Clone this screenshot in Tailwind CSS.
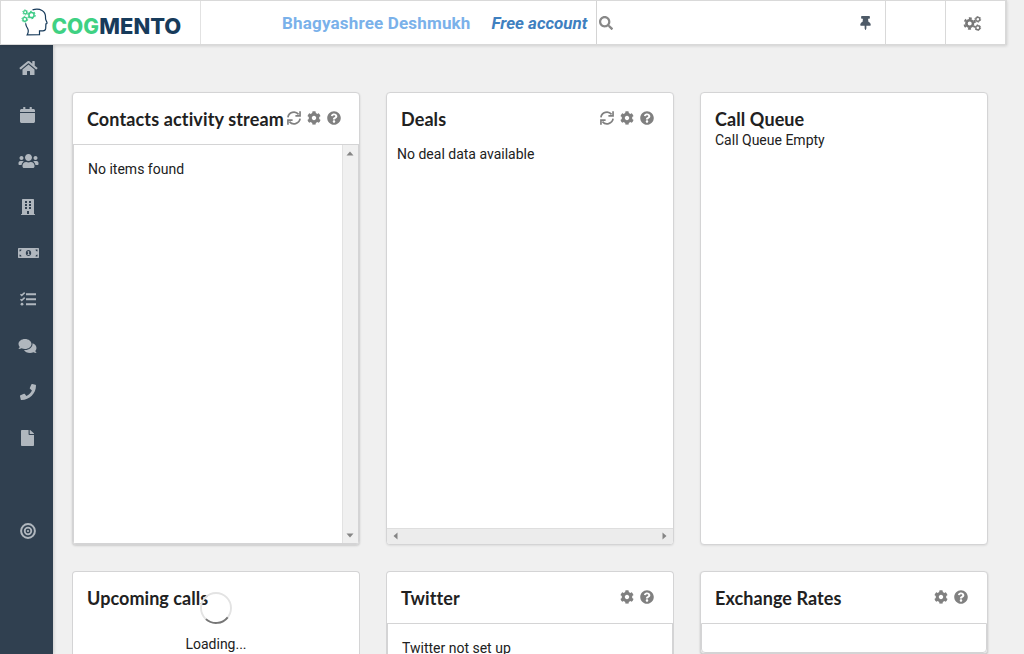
<!DOCTYPE html>
<html lang="en">
<head>
<meta charset="utf-8">
<title>Cogmento CRM</title>
<script src="https://cdn.jsdelivr.net/npm/@tailwindcss/browser@4"></script>
</head>
<body class="w-[1024px] h-[654px] overflow-hidden bg-[#f0f0f0] font-['Roboto',sans-serif] text-sm text-[#212121]">
<svg class="hidden">
  <symbol id="cog" viewBox="0 0 512 512"><path d="M487.4 315.7l-42.6-24.6c4.3-23.2 4.3-47 0-70.2l42.6-24.6c4.9-2.8 7.1-8.6 5.5-14-11.1-35.6-30-67.8-54.7-94.6-3.8-4.1-10-5.1-14.8-2.3L380.8 110c-17.9-15.4-38.5-27.3-60.8-35.1V25.8c0-5.6-3.9-10.5-9.4-11.7-36.7-8.2-74.3-7.8-109.2 0-5.5 1.2-9.4 6.1-9.4 11.7V75c-22.2 7.9-42.8 19.8-60.8 35.1L88.7 85.5c-4.9-2.8-11-1.9-14.8 2.3-24.7 26.7-43.6 58.9-54.7 94.6-1.7 5.4.6 11.2 5.5 14L67.3 221c-4.3 23.2-4.3 47 0 70.2l-42.6 24.6c-4.9 2.8-7.1 8.6-5.5 14 11.1 35.6 30 67.8 54.7 94.6 3.8 4.1 10 5.1 14.8 2.3l42.6-24.6c17.9 15.4 38.5 27.3 60.8 35.1v49.2c0 5.6 3.9 10.5 9.4 11.7 36.7 8.2 74.3 7.8 109.2 0 5.5-1.2 9.4-6.1 9.4-11.7v-49.2c22.2-7.9 42.8-19.8 60.8-35.1l42.6 24.6c4.9 2.8 11 1.9 14.8-2.3 24.7-26.7 43.6-58.9 54.7-94.6 1.5-5.5-.7-11.3-5.6-14.1zM256 336c-44.1 0-80-35.9-80-80s35.9-80 80-80 80 35.9 80 80-35.9 80-80 80z"/></symbol>
  <symbol id="help" viewBox="0 0 512 512"><path d="M504 256c0 136.997-111.043 248-248 248S8 392.997 8 256C8 119.083 119.043 8 256 8s248 111.083 248 248zM262.655 90c-54.497 0-89.255 22.957-116.549 63.758-3.536 5.286-2.353 12.415 2.715 16.258l34.699 26.31c5.205 3.947 12.621 3.008 16.665-2.122 17.864-22.658 30.113-35.797 57.303-35.797 20.429 0 45.698 13.148 45.698 32.958 0 14.976-12.363 22.667-32.534 33.976C247.128 238.528 216 254.941 216 296v4c0 6.627 5.373 12 12 12h56c6.627 0 12-5.373 12-12v-1.333c0-28.462 83.186-29.647 83.186-106.667 0-58.002-60.165-102-116.531-102zM256 338c-25.365 0-46 20.635-46 46 0 25.364 20.635 46 46 46s46-20.636 46-46c0-25.365-20.635-46-46-46z"/></symbol>
  <symbol id="sync" viewBox="0 0 14 14"><path d="M.9 6.3A6.1 6.1 0 0 1 11.6 3.4M13.1 7.7A6.1 6.1 0 0 1 2.4 10.600" fill="none" stroke="currentColor" stroke-width="1.700"/><path d="M12.200 .2h1.700v5.500H8.400V4.100h3.800zM1.800 13.800H.1V8.300h5.500v1.600H1.800z"/></symbol>
</svg>

<header class="flex h-[45px] w-[1007px] bg-white border border-[#d9d9d9] border-r-2 shadow-[0_1px_3px_rgba(0,0,0,.14)] relative z-10">
  <div class="w-[200px] border-r border-[#e2e2e2] pl-5 pt-[7px]">
    <svg width="164" height="32" viewBox="0 0 164 32">
      <path d="M11.500 1.900C14.500 .9 18.500 1 21 2.500c2.600 1.500 3.700 4 3.500 7 0 1.200.1 1.900.5 2.800l.9 2c.3.900 0 1.300-1 1.600l-.2 4.500c-.2 1.900-1 2.500-2.800 2.500h-3.400v3.700l-12.300.2c1.400-2.500 1.500-4.500.3-6.500-1-1.600-1.700-3-1.900-5" fill="none" stroke="#173b5b" stroke-width="1.200"/>
      <g fill="none" stroke="#3ecb86"><circle cx="10.500" cy="7" r="2.600" stroke-width="1.500"/><circle cx="10.500" cy="7" r="3.700" stroke-width="1.100" stroke-dasharray="1.940 1.940"/><circle cx="4.200" cy="4.300" r="1.600" stroke-width="1.200"/><circle cx="4.200" cy="4.300" r="2.500" stroke-width=".9" stroke-dasharray="1.310 1.310"/><circle cx="3.800" cy="11.300" r="1.900" stroke-width="1.400"/><circle cx="3.800" cy="11.300" r="2.900" stroke-width="1" stroke-dasharray="1.520 1.520"/></g>
      <g font-family="Inter, sans-serif" font-weight="800" font-size="21.500"><text x="30.500" y="26.300" fill="#3fd183" textLength="47.500" lengthAdjust="spacingAndGlyphs">COG</text><text x="78.300" y="26.300" fill="#173b5b" textLength="82" lengthAdjust="spacingAndGlyphs">MENTO</text></g>
    </svg>
  </div>
  <div class="flex w-[396px] border-r border-[#d4d4d4] pl-[81px] pt-[11px] font-bold leading-[22px] whitespace-nowrap">
    <span class="text-[17px] tracking-[.18px] text-[#7ab1ea] w-[209.500px]">Bhagyashree Deshmukh</span>
    <span class="text-[17px] tracking-[-.02px] italic text-[#3f80c0]">Free account</span>
  </div>
  <div class="w-[289px] flex justify-between border-r border-[#d9d9d9] pl-[2px] pr-[14px] pt-[15px]">
    <svg class="size-[14px] fill-[#888]" viewBox="0 0 512 512"><path d="M505 442.700L405.300 343c-4.500-4.500-10.600-7-17-7H372c27.600-35.300 44-79.700 44-128C416 93.100 322.900 0 208 0S0 93.100 0 208s93.100 208 208 208c48.300 0 92.700-16.400 128-44v16.300c0 6.400 2.500 12.500 7 17l99.700 99.700c9.400 9.400 24.600 9.400 33.900 0l28.300-28.300c9.400-9.400 9.400-24.600.1-34zM208 336c-70.700 0-128-57.200-128-128 0-70.700 57.200-128 128-128 70.700 0 128 57.200 128 128 0 70.700-57.200 128-128 128z"/></svg>
    <svg class="w-[11px] h-[14px] fill-[#4d5a67]" viewBox="0 0 384 512"><path d="M298.028 214.267L285.793 96H328c13.255 0 24-10.745 24-24V24c0-13.255-10.745-24-24-24H56C42.745 0 32 10.745 32 24v48c0 13.255 10.745 24 24 24h42.207L85.972 214.267C37.465 236.820 0 277.261 0 328c0 13.255 10.745 24 24 24h136v104.007c0 1.242.289 2.467.845 3.578l24 48c2.941 5.882 11.364 5.893 14.311 0l24-48a8.008 8.008 0 0 0 .845-3.578V352h136c13.255 0 24-10.745 24-24-.001-51.183-37.983-91.420-85.973-113.733z"/></svg>
  </div>
  <div class="w-[60px] border-r border-[#d9d9d9]"></div>
  <div class="pl-[17px] pt-[15px]">
    <svg class="w-[19px] h-[15px]" viewBox="0 0 19 15" fill="none" stroke="#777"><circle cx="6.700" cy="7.500" r="3.300" stroke-width="2.600"/><circle cx="6.700" cy="7.500" r="5.300" stroke-width="1.900" stroke-dasharray="2.800 2.750" stroke-dashoffset="1.400" transform="rotate(30 6.700 7.500)"/><circle cx="14.800" cy="3.300" r="2" stroke-width="1.400"/><circle cx="14.800" cy="3.300" r="2.900" stroke-width=".9" stroke-dasharray="1.520 1.520"/><circle cx="14.800" cy="11.700" r="2" stroke-width="1.400"/><circle cx="14.800" cy="11.700" r="2.900" stroke-width=".9" stroke-dasharray="1.520 1.520"/></svg>
  </div>
</header>

<div class="flex h-[609px] overflow-hidden">
  <nav class="w-[53px] shrink-0 bg-[#304050] shadow-[1px_0_3px_rgba(0,0,0,.15)] fill-[#b0b7be] text-[#b0b7be] grid auto-rows-[46.250px] content-start items-center justify-items-center pl-[2px]">
    <svg class="w-[19px] h-[16px] ml-px" viewBox="0 0 576 512"><path d="M280.370 148.260L96 300.110V464a16 16 0 0 0 16 16l112.060-.29a16 16 0 0 0 15.920-16V368a16 16 0 0 1 16-16h64a16 16 0 0 1 16 16v95.640a16 16 0 0 0 16 16.050L464 480a16 16 0 0 0 16-16V300L295.670 148.260a12.190 12.190 0 0 0-15.300 0zM571.600 251.470L488 182.560V44.050a12 12 0 0 0-12-12h-56a12 12 0 0 0-12 12v72.610L318.470 43a48 48 0 0 0-61 0L4.340 251.470a12 12 0 0 0-1.600 16.900l25.500 31A12 12 0 0 0 45.150 301l235.220-193.740a12.190 12.190 0 0 1 15.300 0L530.900 301a12 12 0 0 0 16.900-1.600l25.500-31a12 12 0 0 0-1.700-16.930z"/></svg>
    <svg class="w-[15px] h-[16px] mt-px" viewBox="0 0 448 512" preserveAspectRatio="none"><path d="M12 192h424c6.600 0 12 5.400 12 12v260c0 26.500-21.500 48-48 48H48c-26.500 0-48-21.500-48-48V204c0-6.600 5.400-12 12-12zm436-44v-36c0-26.500-21.500-48-48-48h-48V12c0-6.600-5.400-12-12-12h-40c-6.600 0-12 5.400-12 12v52H160V12c0-6.600-5.400-12-12-12h-40c-6.600 0-12 5.400-12 12v52H48C21.500 64 0 85.500 0 112v36c0 6.600 5.400 12 12 12h424c6.600 0 12-5.400 12-12z"/></svg>
    <svg class="w-[21px] h-[16px] ml-px" viewBox="0 0 640 512"><path d="M96 224c35.300 0 64-28.700 64-64s-28.700-64-64-64-64 28.700-64 64 28.700 64 64 64zm448 0c35.300 0 64-28.700 64-64s-28.700-64-64-64-64 28.700-64 64 28.700 64 64 64zm32 32h-64c-17.600 0-33.500 7.100-45.100 18.600 40.300 22.100 68.900 62 75.100 109.400h66c17.700 0 32-14.300 32-32v-32c0-35.300-28.700-64-64-64zm-256 0c61.900 0 112-50.100 112-112S381.900 32 320 32 208 82.100 208 144s50.100 112 112 112zm76.800 32h-8.300c-20.800 10-43.900 16-68.500 16s-47.600-6-68.500-16h-8.300C179.600 288 128 339.600 128 403.200V432c0 26.500 21.500 48 48 48h288c26.500 0 48-21.500 48-48v-28.800c0-63.600-51.600-115.200-115.200-115.200zm-223.700-13.400C161.500 263.100 145.600 256 128 256H64c-35.300 0-64 28.700-64 64v32c0 17.700 14.300 32 32 32h65.900c6.300-47.400 34.900-87.300 75.200-109.400z"/></svg>
    <svg class="w-[14px] h-[16px]" viewBox="0 0 14 16"><path fill-rule="evenodd" d="M1 .7Q1 0 1.700 0h10.600q.7 0 .7.700V15h.6q.4 0 .4.400v.6H0v-.6Q0 15 .4 15H1zM4 2v2h2V2zm4 0v2h2V2zM4 5v2h2V5zm4 0v2h2V5zM4 8v2h2V8zm4 0v2h2V8zM6 12v3h2v-3z"/></svg>
    <svg class="w-[21px] h-[16px] ml-px" viewBox="0 0 21 16"><path fill-rule="evenodd" d="M.7 3h19.600q.7 0 .7.700v8.600q0 .7-.7.700H.7Q0 13 0 12.300V3.700Q0 3 .7 3zM1.500 4.500v2a2 2 0 0 0 2-2zm16 0a2 2 0 0 0 2 2v-2zm-16 5v2h2a2 2 0 0 0-2-2zm18 0a2 2 0 0 0-2 2h2zM10.500 5C9 5 7.800 6.300 7.800 8s1.200 3 2.700 3 2.700-1.300 2.700-3-1.200-3-2.700-3z"/><path d="M9.500 6.400l1.600-.4v3.300h.6v.8H9.400v-.8h.7V7.200h-.6z"/></svg>
    <svg class="w-[16px] h-[16px]" viewBox="0 0 16 16"><path d="M6 2.200h10v2H6zM6 7.200h10v2H6zM6 12.200h10v2H6z"/><circle cx="2" cy="13.200" r="1.400"/><path d="M.4 3.200l1.300 1.200L4.700 1.600M.4 8.200l1.300 1.200L4.700 6.600" fill="none" stroke="currentColor" stroke-width="1.500"/></svg>
    <svg class="w-[19px] h-[16px]" viewBox="0 0 576 512"><path d="M416 192c0-88.400-93.100-160-208-160S0 103.600 0 192c0 34.300 14.100 65.900 38 92-13.400 30.200-35.500 54.200-35.800 54.500-2.200 2.300-2.800 5.700-1.500 8.700S4.800 352 8 352c36.600 0 66.900-12.300 88.700-25 32.200 15.700 70.300 25 111.300 25 114.900 0 208-71.600 208-160zm122 220c23.900-26 38-57.700 38-92 0-66.900-53.500-124.200-129.300-148.100.9 6.600 1.300 13.300 1.300 20.100 0 105.900-107.700 192-240 192-10.800 0-21.300-.8-31.700-1.900C207.800 439.600 281.800 480 368 480c41 0 79.100-9.200 111.300-25 21.800 12.700 52.100 25 88.700 25 3.200 0 6.100-1.900 7.300-4.800 1.300-2.900.7-6.300-1.500-8.700-.3-.3-22.400-24.200-35.800-54.500z"/></svg>
    <svg class="size-[16px]" viewBox="0 0 512 512"><path d="M493.400 24.600l-104-24c-11.300-2.600-22.900 3.300-27.500 13.900l-48 112c-4.200 9.800-1.400 21.300 6.900 28l60.600 49.600c-36 76.700-98.900 140.500-177.200 177.200l-49.600-60.600c-6.800-8.300-18.200-11.100-28-6.900l-112 48C3.900 366.500-2 378.100.6 389.400l24 104C27.100 504.200 36.700 512 48 512c256.100 0 464-207.500 464-464 0-11.200-7.700-20.900-18.600-23.400z"/></svg>
    <svg class="w-[13px] h-[16px]" viewBox="0 0 384 512" preserveAspectRatio="none"><path d="M224 136V0H24C10.700 0 0 10.700 0 24v464c0 13.300 10.700 24 24 24h336c13.300 0 24-10.700 24-24V160H248c-13.200 0-24-10.800-24-24zm160-14.100v6.100H256V0h6.100c6.400 0 12.500 2.500 17 7l97.900 98c4.500 4.500 7 10.600 7 16.900z"/></svg>
    <svg class="size-[16px] row-start-11" viewBox="0 0 16 16"><g fill="none" stroke="currentColor" stroke-width="2"><circle cx="8" cy="8" r="6.900"/><circle cx="8" cy="8" r="3.300" stroke-width="1.800"/></g><circle cx="8" cy="8" r="1.100"/></svg>
  </nav>

  <main class="grid grid-cols-[288px_288px_288px] grid-rows-[453px_83px] gap-[26px] pl-[19px] pt-[47px] content-start [&_h2]:[font-variant-ligatures:none]">
    <section class="flex flex-col bg-white border border-[#d4d4d5] rounded shadow-[0_1px_2px_rgba(0,0,0,.15)] overflow-hidden">
      <div class="flex h-[51px] pl-[14px] pr-[18.400px] pt-[13px] justify-between whitespace-nowrap">
        <h2 class="font-['Lato',sans-serif] font-bold text-[18px] leading-[26px] tracking-[.13px]">Contacts activity stream</h2>
        <div class="flex gap-[6px] pt-[5px] fill-[#808080] text-[#808080]"><svg class="size-[14px]"><use href="#sync"/></svg><svg class="size-[14px]"><use href="#cog"/></svg><svg class="size-[14px]"><use href="#help"/></svg></div>
      </div>
      <div class="flex flex-1 border border-[#d4d4d5]">
        <p class="flex-1 pl-[14px] pt-[14px] leading-5">No items found</p>
        <div class="w-[16px] bg-[#f0f0f0] border-l border-[#e2e2e2] flex flex-col justify-between items-center pt-[6px] pb-[5px] pr-px">
          <svg width="8" height="5" fill="#858585"><path d="M4 .5L7.500 4.500H.5z"/></svg>
          <svg width="8" height="5" fill="#858585"><path d="M4 4.500L7.500 .5H.5z"/></svg>
        </div>
      </div>
    </section>

    <section class="flex flex-col bg-white border border-[#d4d4d5] rounded shadow-[0_1px_2px_rgba(0,0,0,.08)] overflow-hidden">
      <div class="flex h-[51px] pl-[14px] pr-[18.600px] pt-[13px] justify-between whitespace-nowrap">
        <h2 class="font-['Lato',sans-serif] font-bold text-[18px] leading-[26px] tracking-[.1px]">Deals</h2>
        <div class="flex gap-[6px] pt-[5px] fill-[#808080] text-[#808080]"><svg class="size-[14px]"><use href="#sync"/></svg><svg class="size-[14px]"><use href="#cog"/></svg><svg class="size-[14px]"><use href="#help"/></svg></div>
      </div>
      <p class="flex-1 pl-[10px] leading-5">No deal data available</p>
      <div class="h-[16px] bg-[#ececec] border-t border-[#dedede] flex justify-between items-center px-[6px] pb-px">
        <svg width="5" height="8" fill="#858585"><path d="M.5 4L4.500 .5V7.500z"/></svg>
        <svg width="5" height="8" fill="#858585"><path d="M4.500 4L.5 .5V7.500z"/></svg>
      </div>
    </section>

    <section class="bg-white border border-[#d4d4d5] rounded shadow-[0_1px_2px_rgba(0,0,0,.08)] pl-[14px] pt-[13px]">
      <h2 class="font-['Lato',sans-serif] font-bold text-[18px] leading-[26px] tracking-[.1px]">Call Queue</h2>
      <p class="leading-4">Call Queue Empty</p>
    </section>

    <section class="bg-white border border-b-0 border-[#d4d4d5] rounded-t relative pl-[14px] pt-[13px]">
      <h2 class="font-['Lato',sans-serif] font-bold text-[18px] leading-[26px] tracking-[.06px]">Upcoming calls</h2>
      <div class="absolute left-[127px] top-[20px] size-[32px]">
        <svg width="32" height="32" fill="none" stroke-width="1.900"><circle cx="16" cy="16" r="15" stroke="#e3e3e3"/><path d="M5.900 27.100A15 15 0 0 0 27.700 25.300" stroke="#767676"/></svg>
      </div>
      <p class="-ml-[14px] pt-[23px] leading-5 text-center">Loading...</p>
    </section>

    <section class="flex flex-col bg-white border border-b-0 border-[#d4d4d5] rounded-t">
      <div class="flex h-[51px] pl-[14px] pr-[18.600px] pt-[13px] justify-between whitespace-nowrap">
        <h2 class="font-['Lato',sans-serif] font-bold text-[18px] leading-[26px] tracking-[.13px]">Twitter</h2>
        <div class="flex gap-[6px] pt-[5px] fill-[#808080]"><svg class="size-[14px]"><use href="#cog"/></svg><svg class="size-[14px]"><use href="#help"/></svg></div>
      </div>
      <div class="h-[31px] border border-b-0 border-[#d4d4d5] pl-[14px] pt-[16px] leading-[16px] whitespace-nowrap">Twitter not set up</div>
    </section>

    <section class="flex flex-col bg-white border border-[#d4d4d5] rounded shadow-[0_1px_2px_rgba(0,0,0,.2)]">
      <div class="flex h-[51px] pl-[14px] pr-[18.600px] pt-[13px] justify-between whitespace-nowrap">
        <h2 class="font-['Lato',sans-serif] font-bold text-[18px] leading-[26px] tracking-[.08px]">Exchange Rates</h2>
        <div class="flex gap-[6px] pt-[5px] fill-[#808080]"><svg class="size-[14px]"><use href="#cog"/></svg><svg class="size-[14px]"><use href="#help"/></svg></div>
      </div>
      <div class="flex-1 border border-[#d4d4d5] rounded-b"></div>
    </section>
  </main>
</div>
</body>
</html>
